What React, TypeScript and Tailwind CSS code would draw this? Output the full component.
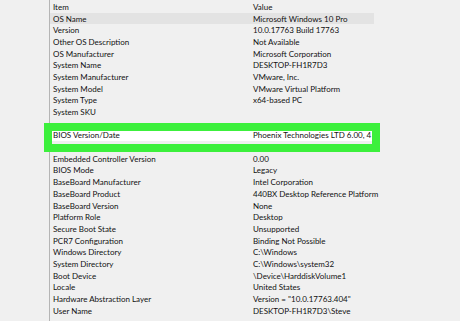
const rows: [string, string][] = [
  ['Item', 'Value'],
  ['OS Name', 'Microsoft Windows 10 Pro'],
  ['Version', '10.0.17763 Build 17763'],
  ['Other OS Description', 'Not Available'],
  ['OS Manufacturer', 'Microsoft Corporation'],
  ['System Name', 'DESKTOP-FH1R7D3'],
  ['System Manufacturer', 'VMware, Inc.'],
  ['System Model', 'VMware Virtual Platform'],
  ['System Type', 'x64-based PC'],
  ['System SKU', ''],
  ['', ''],
  ['BIOS Version/Date', 'Phoenix Technologies LTD 6.00, 4'],
  ['', ''],
  ['Embedded Controller Version', '0.00'],
  ['BIOS Mode', 'Legacy'],
  ['BaseBoard Manufacturer', 'Intel Corporation'],
  ['BaseBoard Product', '440BX Desktop Reference Platform'],
  ['BaseBoard Version', 'None'],
  ['Platform Role', 'Desktop'],
  ['Secure Boot State', 'Unsupported'],
  ['PCR7 Configuration', 'Binding Not Possible'],
  ['Windows Directory', 'C:\\Windows'],
  ['System Directory', 'C:\\Windows\\system32'],
  ['Boot Device', '\\Device\\HarddiskVolume1'],
  ['Locale', 'United States'],
  ['Hardware Abstraction Layer', 'Version = "10.0.17763.404"'],
  ['User Name', 'DESKTOP-FH1R7D3\\Steve'],
  ['', ''],
];

export default function App() {
  return (
    <div
      className="relative w-[460px] h-[321px] overflow-hidden bg-[#f0f0f0] text-[#111] text-[8px] flex"
      style={{ fontFamily: 'Lato, "Noto Sans", sans-serif' }}
    >
      <div className="w-[50px] shrink-0 border-r border-[#b5b5b5]" />
      <div className="flex-1 pt-[1px]">
        {rows.map(([item, value], i) => (
          <div
            key={i}
            className={
              'flex items-center h-[11.7px] leading-none w-[324px] ' +
              (i === 1 ? 'bg-[#e3e3e3]' : i === 11 ? 'bg-white' : '')
            }
          >
            <span className="w-[203px] shrink-0 pl-[3px] whitespace-nowrap">{item}</span>
            <span className="shrink-0 whitespace-nowrap">{value}</span>
          </div>
        ))}
      </div>

      {/* highlight around BIOS row */}
      <div className="absolute left-[44px] top-[123px] w-[336px] h-[29px] border-[8px] border-[#3cf03c]" />
    </div>
  );
}
